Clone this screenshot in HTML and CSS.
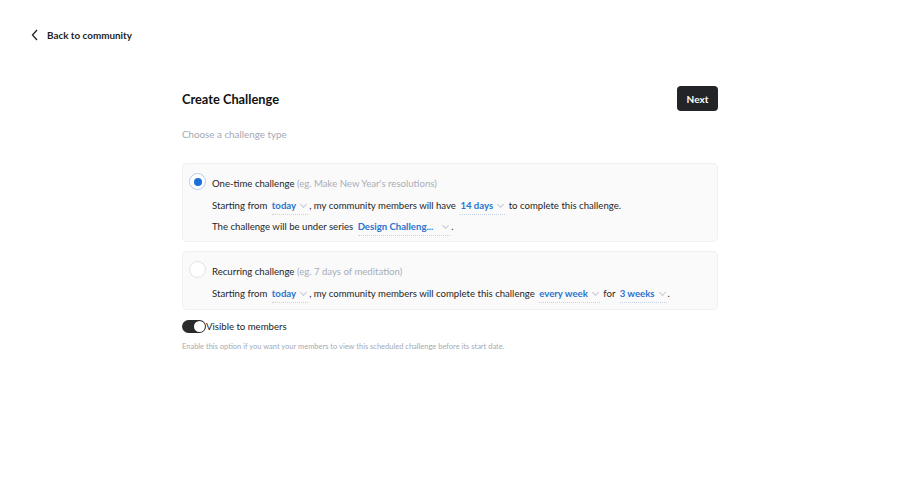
FILE: index.html
```html
<!DOCTYPE html>
<html>
<head>
<meta charset="utf-8">
<link rel="stylesheet" href="styles.css">
</head>
<body>
<div class="top">
  <a class="back" href="#">
    <svg width="8" height="12" viewBox="0 0 8 12"><path d="M6 1 L1.5 6 L6 11" fill="none" stroke="#222" stroke-width="1.3"/></svg>
    <span>Back to community</span>
  </a>
</div>
<main class="main">
  <div class="head">
    <h1 class="title">Create Challenge</h1>
    <button class="next">Next</button>
  </div>
  <p class="sub">Choose a challenge type</p>
  <div class="card">
    <span class="radio on"></span>
    <div class="body">
      <div class="line label">One-time challenge <span class="hint">(eg. Make New Year's resolutions)</span></div>
      <div class="line">Starting from <span class="dd">today <i class="chev"></i></span>, my community members will have <span class="dd">14 days <i class="chev"></i></span> to complete this challenge.</div>
      <div class="line">The challenge will be under series <span class="dd">Design Challeng... <i class="chev wide"></i></span>.</div>
    </div>
  </div>
  <div class="card card-short">
    <span class="radio"></span>
    <div class="body">
      <div class="line label">Recurring challenge <span class="hint">(eg. 7 days of meditation)</span></div>
      <div class="line">Starting from <span class="dd">today <i class="chev"></i></span>, my community members will complete this challenge <span class="dd">every week <i class="chev"></i></span> for <span class="dd">3 weeks <i class="chev"></i></span>.</div>
    </div>
  </div>
  <div class="vis">
    <span class="toggle"><span class="knob"></span></span>
    <span>Visible to members</span>
  </div>
  <p class="note">Enable this option if you want your members to view this scheduled challenge before its start date.</p>
</main>
</body>
</html>
```
FILE: styles.css
```css
* { box-sizing: border-box; }
body {
  margin: 0;
  background: #fff;
  font-family: "Lato", "Liberation Sans", sans-serif;
  color: #2a2a2a;
  width: 900px;
  height: 484px;
}
.top { padding: 29px 0 0 31px; height: 86px; }
.back {
  display: flex;
  align-items: center;
  gap: 8px;
  text-decoration: none;
  color: #1e1e1e;
  font-size: 9.9px;
  font-weight: 700;
}
.main { width: 536px; margin: 0 auto; }
.head { display: flex; justify-content: space-between; align-items: center; }
.title { margin: 0; font-size: 12.8px; font-weight: 700; color: #111; }
.next {
  width: 41px; height: 25px;
  background: #222427;
  color: #fff;
  border: none;
  border-radius: 4px;
  font-family: inherit;
  font-size: 10px;
  font-weight: 700;
}
.sub { margin: 17px 0 23px; font-size: 9.8px; color: #a4a8b4; }
.card {
  display: flex;
  gap: 6px;
  background: #fafafa;
  border: 1px solid #f0f0f0;
  border-radius: 5px;
  padding: 13px 12px 0 6px;
  margin-bottom: 9px;
}
.card-short { padding-bottom: 1px; }
.radio {
  flex: none;
  width: 17px; height: 17px;
  border-radius: 50%;
  border: 1px solid #e2e2e2;
  background: #fff;
  margin-top: -4px;
  position: relative;
}
.radio.on { border-color: #b9cbe6; }
.radio.on::after {
  content: "";
  position: absolute;
  left: 3.5px; top: 3.5px;
  width: 8px; height: 8px;
  border-radius: 50%;
  background: #1f6fd8;
}
.body { display: flex; flex-direction: column; }
.line { font-size: 9.6px; line-height: 14px; height: 21px; color: #262626; white-space: nowrap; }
.label { height: 22px; }
.hint { color: #a9adb8; }
.dd {
  display: inline-flex;
  align-items: center;
  gap: 4px;
  color: #2b74d0;
  font-weight: 700;
  border-bottom: 1px dotted #c6d3e6;
  margin: 0 1px 0 2px;
  padding-bottom: 1px;
}
.chev {
  display: inline-block;
  width: 5px; height: 5px;
  border-right: 1px solid #c5c9d1;
  border-bottom: 1px solid #c5c9d1;
  transform: rotate(45deg);
  margin: 0 2px 3px 1px;
}
.chev.wide { margin-left: 6px; }
.vis {
  display: flex;
  align-items: center;
  font-size: 9.6px;
  color: #222;
  height: 14px;
}
.toggle {
  width: 24px; height: 13px;
  border-radius: 7px;
  background: #2a2a2a;
  position: relative;
}
.knob {
  position: absolute;
  right: 1px; top: 1px;
  width: 11px; height: 11px;
  border-radius: 50%;
  background: #fff;
}
.note { margin: 9px 0 0; font-size: 7.5px; color: #a6aab4; }
```
